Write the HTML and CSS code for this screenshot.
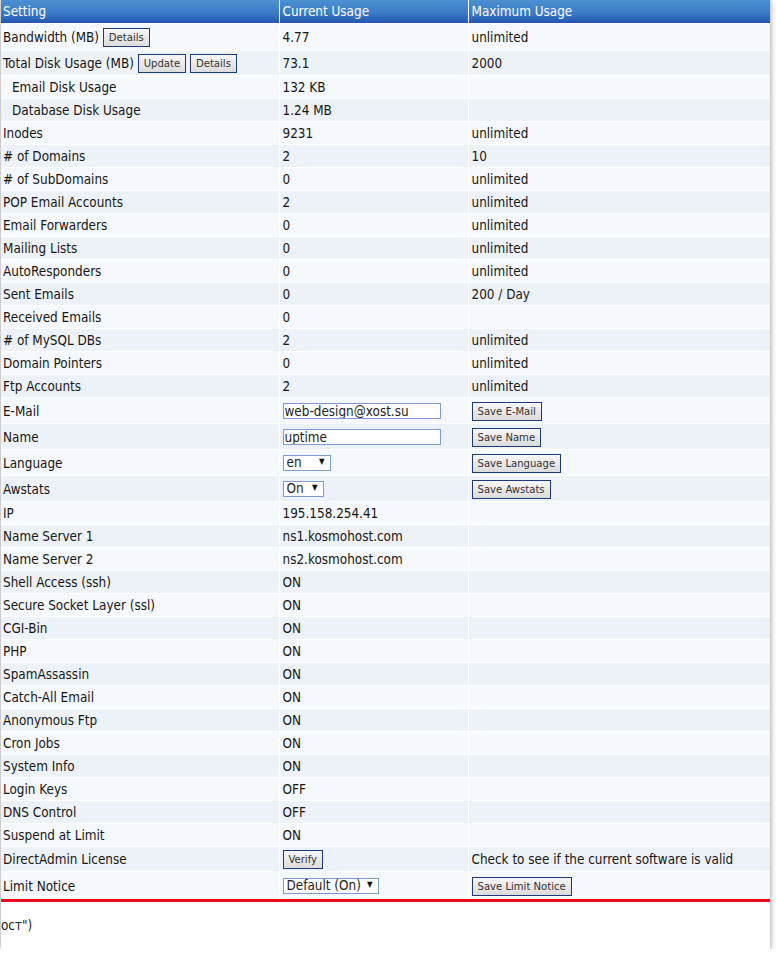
FILE: index.html
```html
<!DOCTYPE html>
<html lang="ru">
    <head>
        <meta charset="UTF-8">
        <meta name="viewport" content="width=device-width, initial-scale=1.0">
        <title>User Usage</title>
        <link rel="stylesheet" href="styles.css">
    </head>
    <body>
        <div class="panel">
            <table class="usage">
                <colgroup>
                    <col class="c1"><col class="c2"><col class="c3">
                </colgroup>
                <tr class="head">
                    <th>Setting</th><th>Current Usage</th><th>Maximum Usage</th>
                </tr>
                <tr class="tall"><td>Bandwidth (MB) <button class="btn">Details</button></td><td>4.77</td><td>unlimited</td></tr>
                <tr class="tall3"><td>Total Disk Usage (MB) <button class="btn">Update</button> <button class="btn">Details</button></td><td>73.1</td><td>2000</td></tr>
                <tr><td class="sub">Email Disk Usage</td><td>132 KB</td><td></td></tr>
                <tr><td class="sub">Database Disk Usage</td><td>1.24 MB</td><td></td></tr>
                <tr><td>Inodes</td><td>9231</td><td>unlimited</td></tr>
                <tr><td># of Domains</td><td>2</td><td>10</td></tr>
                <tr><td># of SubDomains</td><td>0</td><td>unlimited</td></tr>
                <tr><td>POP Email Accounts</td><td>2</td><td>unlimited</td></tr>
                <tr><td>Email Forwarders</td><td>0</td><td>unlimited</td></tr>
                <tr><td>Mailing Lists</td><td>0</td><td>unlimited</td></tr>
                <tr><td>AutoResponders</td><td>0</td><td>unlimited</td></tr>
                <tr><td>Sent Emails</td><td>0</td><td>200 / Day</td></tr>
                <tr><td>Received Emails</td><td>0</td><td></td></tr>
                <tr><td># of MySQL DBs</td><td>2</td><td>unlimited</td></tr>
                <tr><td>Domain Pointers</td><td>0</td><td>unlimited</td></tr>
                <tr><td>Ftp Accounts</td><td>2</td><td>unlimited</td></tr>
                <tr class="tall2"><td>E-Mail</td><td><input class="field" type="text" value="web-design@xost.su"></td><td><button class="btn">Save E-Mail</button></td></tr>
                <tr class="tall2"><td>Name</td><td><input class="field" type="text" value="uptime"></td><td><button class="btn">Save Name</button></td></tr>
                <tr class="tall2"><td>Language</td><td><span class="drop"><select class="pick pick-en"><option>en</option></select><span class="arrow">&#9660;</span></span></td><td><button class="btn">Save Language</button></td></tr>
                <tr class="tall2"><td>Awstats</td><td><span class="drop"><select class="pick pick-on"><option>On</option></select><span class="arrow">&#9660;</span></span></td><td><button class="btn">Save Awstats</button></td></tr>
                <tr><td>IP</td><td>195.158.254.41</td><td></td></tr>
                <tr><td>Name Server 1</td><td>ns1.kosmohost.com</td><td></td></tr>
                <tr><td>Name Server 2</td><td>ns2.kosmohost.com</td><td></td></tr>
                <tr><td>Shell Access (ssh)</td><td>ON</td><td></td></tr>
                <tr><td>Secure Socket Layer (ssl)</td><td>ON</td><td></td></tr>
                <tr><td>CGI-Bin</td><td>ON</td><td></td></tr>
                <tr><td>PHP</td><td>ON</td><td></td></tr>
                <tr><td>SpamAssassin</td><td>ON</td><td></td></tr>
                <tr><td>Catch-All Email</td><td>ON</td><td></td></tr>
                <tr><td>Anonymous Ftp</td><td>ON</td><td></td></tr>
                <tr><td>Cron Jobs</td><td>ON</td><td></td></tr>
                <tr><td>System Info</td><td>ON</td><td></td></tr>
                <tr><td>Login Keys</td><td>OFF</td><td></td></tr>
                <tr><td>DNS Control</td><td>OFF</td><td></td></tr>
                <tr><td>Suspend at Limit</td><td>ON</td><td></td></tr>
                <tr class="tall3"><td>DirectAdmin License</td><td><button class="btn">Verify</button></td><td>Check to see if the current software is valid</td></tr>
                <tr class="tall4"><td>Limit Notice</td><td><span class="drop"><select class="pick pick-def"><option>Default (On)</option></select><span class="arrow">&#9660;</span></span></td><td><button class="btn">Save Limit Notice</button></td></tr>
            </table>
            <div class="footer">
                <span class="footer-text">ост")</span>
            </div>
        </div>
    </body>
</html>
```
FILE: styles.css
```css
body{
    margin:0;
    background:#fff;
    font-family:"DejaVu Sans Condensed","DejaVu Sans",sans-serif;
    font-size:13.4px;
    color:#161616;
    overflow:hidden;
}
.panel{
    width:769px;
    margin-left:1px;
    background:#fff;
    box-shadow:0 0 6px rgba(0,0,0,0.45);
    overflow:hidden;
}
.usage{
    width:100%;
    border-collapse:collapse;
    table-layout:fixed;
    border-bottom:3px solid #ec0a1a;
}
.c1{ width:278px; }
.c2{ width:189px; }
.head th{
    height:23px;
    padding:0 0 0 3px;
    text-align:left;
    font-weight:normal;
    color:#fff;
    background:linear-gradient(#4c90d2,#3b7cc8 55%,#2455b0);
    border-left:1px solid #fff;
}
.head th:first-child{ border-left:none; padding-left:2px; }
.usage td{
    height:21px;
    padding:1px 0 0 3px;
    border-top:1px solid #fff;
    border-left:1px solid #fff;
    background:#f5f8fc;
    white-space:nowrap;
}
.usage td:first-child{ border-left:none; padding-left:2px; }
.usage tr:nth-child(odd) td{ background:#edf2f8; }
.usage tr.tall td{ height:25px; }
.usage tr.tall2 td{ height:24px; }
.usage tr.tall3 td{ height:23px; }
.usage tr.tall4 td{ height:26px; }
.usage td.sub{ padding-left:11px; }

.btn{
    font-family:"DejaVu Sans Condensed","DejaVu Sans",sans-serif;
    font-size:11.2px;
    color:#333;
    height:19px;
    padding:0 5px;
    margin:0;
    border:1px solid #1d3b7a;
    border-radius:0;
    background:linear-gradient(#f6f6f6,#dcdcdc);
    vertical-align:middle;
}
.field{
    font-family:"DejaVu Sans Condensed","DejaVu Sans",sans-serif;
    font-size:13.4px;
    color:#222;
    width:158px;
    height:16px;
    box-sizing:border-box;
    padding:0 1px;
    margin:0;
    border:1px solid #7d9bd0;
    background:#fff;
    vertical-align:middle;
}
.drop{
    position:relative;
    display:inline-block;
    vertical-align:middle;
}
.pick{
    -webkit-appearance:none;
    appearance:none;
    font-family:"DejaVu Sans Condensed","DejaVu Sans",sans-serif;
    font-size:13.4px;
    color:#222;
    height:16px;
    box-sizing:border-box;
    padding:0 0 0 3px;
    margin:0;
    border:1px solid #7d9bd0;
    border-radius:0;
    background:#fff;
    line-height:14px;
    display:block;
}
.pick-en{ width:48px; }
.pick-on{ width:41px; }
.pick-def{ width:96px; }
.arrow{
    position:absolute;
    right:6px;
    top:2px;
    font-size:8px;
    color:#111;
}
.footer{
    height:47px;
    display:flex;
    align-items:center;
}
.footer-text{
    color:#222;
}
```
